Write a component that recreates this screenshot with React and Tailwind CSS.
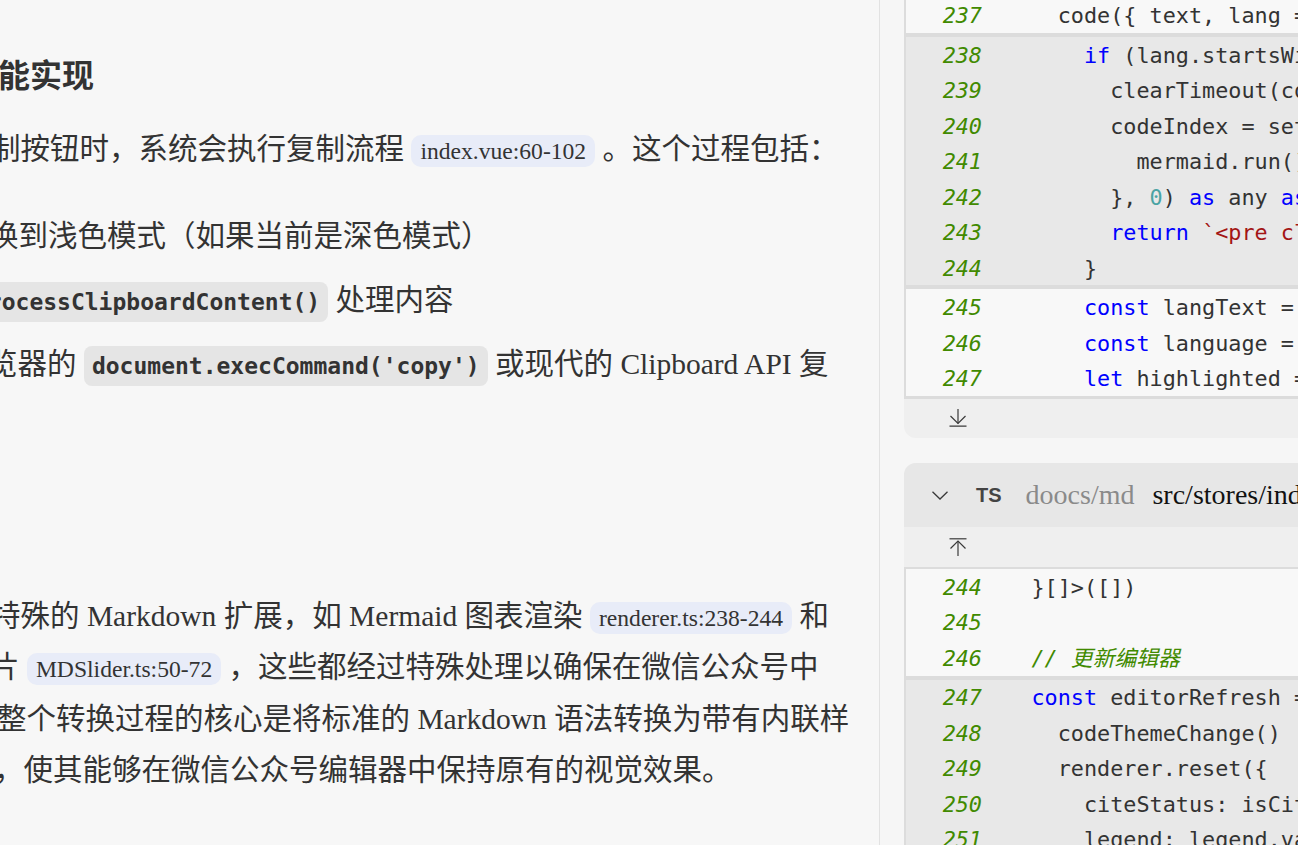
import React from "react";

const K = "text-[#0000ff]";
const N = "text-[#4aa3a3]";
const S = "text-[#a31515]";
const C = "italic text-[#418a00]";

const cardOne = {
  top: [[237, [["  code({ text, lang = '' }: Tokens.Code) {"]]]],
  mark: [
    [238, [["    "], ["if", K], [" (lang.startsWith("], ["'mermaid'", S], [")) {"]]],
    [239, [["      clearTimeout(codeIndex)"]]],
    [240, [["      codeIndex = setTimeout(() => {"]]],
    [241, [["        mermaid.run()"]]],
    [242, [["      }, "], ["0", N], [") "], ["as", K], [" any "], ["as", K], [" number"]]],
    [243, [["      "], ["return", K], [" "], ["`<pre class=\"mermaid\">${text}</pre>`", S]]],
    [244, [["    }"]]],
  ],
  rest: [
    [245, [["    "], ["const", K], [" langText = lang.split(' ')[0]"]]],
    [246, [["    "], ["const", K], [" language = hljs.getLanguage(langText)"]]],
    [247, [["    "], ["let", K], [" highlighted = hljs.highlight(text)"]]],
  ],
};

const cardTwo = {
  top: [
    [244, [["}[]>([])"]]],
    [245, [[""]]],
    [246, [["// 更新编辑器", C]]],
  ],
  mark: [
    [247, [["const", K], [" editorRefresh = () => {"]]],
    [248, [["  codeThemeChange()"]]],
    [249, [["  renderer.reset({"]]],
    [250, [["    citeStatus: isCiteStatus.value,"]]],
    [251, [["    legend: legend.value,"]]],
  ],
};

const CodeRow = ({ num, tokens }) => (
  <div className="flex h-[35.5px] items-center pt-[3px]">
    <span className="w-[76px] shrink-0 text-right italic text-[#418a00]">{num}</span>
    <span className="whitespace-pre pl-[49.5px] text-[#333333]">
      {tokens.map(([text, cls], i) => (
        <span key={i} className={cls || ""}>
          {text}
        </span>
      ))}
    </span>
  </div>
);

const Rows = ({ rows }) =>
  rows.map(([num, tokens]) => <CodeRow key={num} num={num} tokens={tokens} />);

const ArrowToLine = ({ up }) => (
  <svg width="18" height="18" viewBox="0 0 18 18" fill="none" stroke="#3a3a3a" strokeWidth="1.2">
    {up ? (
      <>
        <path d="M0.5 0.8H17.5" />
        <path d="M9 3V18" />
        <path d="M1.5 10.5L9 3L16.5 10.5" />
      </>
    ) : (
      <>
        <path d="M9 0V14.5" />
        <path d="M1.5 7L9 14.5L16.5 7" />
        <path d="M0.5 17.2H17.5" />
      </>
    )}
  </svg>
);

const Chevron = () => (
  <svg width="16" height="9" viewBox="0 0 16 9" fill="none" stroke="#3a3a3a" strokeWidth="1.3">
    <path d="M0.5 0.7L8 8L15.5 0.7" />
  </svg>
);

const FileChip = ({ children }) => (
  <span className="rounded-[10px] bg-[#e8ecf8] px-[9px] py-[3px] text-[23.6px] leading-none">{children}</span>
);

const CodeChip = ({ children }) => (
  <span className="rounded-[8px] bg-[#e5e5e5] px-[8px] py-[7px] font-['DejaVu_Sans_Mono',monospace] text-[23px] font-bold leading-none">
    {children}
  </span>
);

const App = () => {
  return (
    <div className="flex h-[845px] w-[1298px] overflow-hidden bg-[#f7f7f7]">
      <div className="w-[880px] shrink-0 overflow-hidden border-r border-[#e2e2e2] font-['Liberation_Serif','Noto_Sans_CJK_SC',serif] text-[29.5px] text-[#333333]">
        <h2 className="-ml-[34px] mt-[51px] whitespace-nowrap text-[32px] font-bold leading-[50px]">功能实现</h2>
        <p className="-ml-[9px] mt-[23px] whitespace-nowrap leading-[51.5px]">
          制按钮时，系统会执行复制流程 <FileChip>index.vue:60-102</FileChip> 。这个过程包括：
        </p>
        <ul className="mt-[28px] whitespace-nowrap leading-[64px]">
          <li className="-ml-[11px]">换到浅色模式（如果当前是深色模式）</li>
          <li className="-ml-[34px]">
            <CodeChip>processClipboardContent()</CodeChip> 处理内容
          </li>
          <li className="-ml-[12px]">
            览器的 <CodeChip>document.execCommand('copy')</CodeChip> 或现代的 Clipboard API 复
          </li>
        </ul>
        <div className="mt-[195px] whitespace-nowrap leading-[51.5px]">
          <p className="-ml-[9px]">
            特殊的 Markdown 扩展，如 Mermaid 图表渲染 <FileChip>renderer.ts:238-244</FileChip> 和
          </p>
          <p className="-ml-[10px]">
            片 <FileChip>MDSlider.ts:50-72</FileChip> ，这些都经过特殊处理以确保在微信公众号中
          </p>
          <p className="-ml-[3px]">整个转换过程的核心是将标准的 Markdown 语法转换为带有内联样</p>
          <p className="-ml-[6px]">，使其能够在微信公众号编辑器中保持原有的视觉效果。</p>
        </div>
      </div>

      <div className="min-w-0 flex-1 overflow-hidden bg-[#f6f6f6] pl-[24px] font-['DejaVu_Sans_Mono','Noto_Sans_CJK_SC',monospace] text-[21.8px]">
        <div className="-mt-[2.75px] w-[700px] overflow-hidden rounded-b-xl bg-[#efefef]">
          <div className="border-b-[3px] border-l-2 border-[#dcdcdc] bg-[#f8f8f8]">
            <Rows rows={cardOne.top} />
            <div className="border-y-4 border-[#dcdcdc] bg-[#e8e8e8]">
              <Rows rows={cardOne.mark} />
            </div>
            <Rows rows={cardOne.rest} />
          </div>
          <div className="flex h-[39px] items-center pl-[45px]">
            <ArrowToLine />
          </div>
        </div>

        <div className="mt-[25.25px] w-[700px] overflow-hidden rounded-t-xl bg-[#efefef]">
          <div className="flex h-[64px] items-center bg-[#e7e7e7] pl-[28px]">
            <Chevron />
            <span className="ml-[28px] font-['Liberation_Sans',sans-serif] text-[20px] font-bold text-[#444444]">TS</span>
            <span className="ml-[24px] font-['Liberation_Serif',serif] text-[28px] text-[#8a8a8a]">doocs/md</span>
            <span className="ml-[18px] font-['Liberation_Serif',serif] text-[28px] text-[#111111]">src/stores/index.ts</span>
          </div>
          <div className="flex h-[42px] items-center border-b-2 border-[#dcdcdc] pl-[45px]">
            <ArrowToLine up />
          </div>
          <div className="border-l-2 border-[#dcdcdc] bg-[#f8f8f8]">
            <Rows rows={cardTwo.top} />
            <div className="border-t-4 border-[#dcdcdc] bg-[#e8e8e8]">
              <Rows rows={cardTwo.mark} />
            </div>
          </div>
        </div>
      </div>
    </div>
  );
};

export default App;
